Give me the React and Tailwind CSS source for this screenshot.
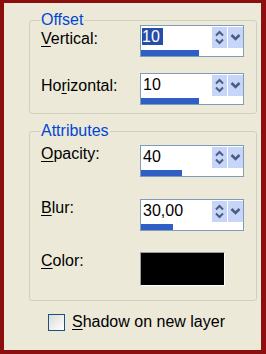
import React from 'react';

const SpinArrows = () => (
  <svg width="15" height="21" viewBox="0 0 15 21" aria-hidden="true">
    <path d="M4 8.5 L7.5 5 L11 8.5" fill="none" stroke="#4b5d85" strokeWidth="2" />
    <path d="M4 12.5 L7.5 16 L11 12.5" fill="none" stroke="#4b5d85" strokeWidth="2" />
  </svg>
);

const DropArrow = () => (
  <svg width="15" height="21" viewBox="0 0 15 21" aria-hidden="true">
    <path d="M3.5 8 L7.5 12 L11.5 8" fill="none" stroke="#4b5d85" strokeWidth="2.5" />
  </svg>
);

function SpinField({ value, fill, selected }) {
  return (
    <div className="flex h-[32px] w-[104px] flex-col border border-[#7f9db9] bg-white">
      <div className="flex h-[24px] items-start">
        <div className="flex-1 pl-[1px] pt-[1px] leading-[20px]">
          <span className={selected ? 'bg-[#244ea8] pr-[3px] text-white' : 'pl-[1px]'}>{value}</span>
        </div>
        <div className="mt-[1px] flex gap-[1px]">
          <span className="flex h-[21px] w-[15px] bg-[#c7d6f8]">
            <SpinArrows />
          </span>
          <span className="flex h-[21px] w-[15px] bg-[#c7d6f8]">
            <DropArrow />
          </span>
        </div>
      </div>
      <div className="h-[6px] bg-white">
        <div className="h-full bg-[#2f5fc4]" style={{ width: fill }} />
      </div>
    </div>
  );
}

function Mnemonic({ before = '', letter, after }) {
  return (
    <span>
      {before}
      <span className="underline underline-offset-[2px]">{letter}</span>
      {after}
    </span>
  );
}

function Group({ title, className, children }) {
  return (
    <div className={`relative ml-[25px] mr-[4px] rounded-[3px] border border-[#d0d0bf] pl-[11px] ${className}`}>
      <span className="absolute left-[10px] top-[-10px] bg-[#ece9d8] px-[1px] leading-[18px] text-[#0046d5]">
        {title}
      </span>
      {children}
    </div>
  );
}

export default function App() {
  return (
    <div className="h-[354px] w-[266px] bg-[#8c0f0f] pb-[4px] pl-[4px] pr-[5px] pt-[3px] font-['Liberation_Sans',Arial,sans-serif] text-[16px] text-black">
      <div className="flex h-full flex-col bg-[#ece9d8]">
        <Group title="Offset" className="mt-[17px] pb-[8px] pt-[4px]">
          <div className="flex items-start">
            <div className="mt-[5px] w-[99px] leading-[18px]">
              <Mnemonic letter="V" after="ertical:" />
            </div>
            <SpinField value="10" fill={58} selected />
          </div>
          <div className="mt-[16px] flex items-start">
            <div className="mt-[4px] w-[99px] leading-[18px]">
              <Mnemonic before="Ho" letter="r" after="izontal:" />
            </div>
            <SpinField value="10" fill={58} />
          </div>
        </Group>

        <Group title="Attributes" className="mt-[17px] pb-[14px] pt-[13px]">
          <div className="flex items-start">
            <div className="mt-[0px] w-[99px] leading-[18px]">
              <Mnemonic letter="O" after="pacity:" />
            </div>
            <SpinField value="40" fill={41} />
          </div>
          <div className="mt-[22px] flex items-start">
            <div className="mt-[0px] w-[99px] leading-[18px]">
              <Mnemonic letter="B" after="lur:" />
            </div>
            <SpinField value="30,00" fill={32} />
          </div>
          <div className="mt-[21px] flex items-start">
            <div className="mt-[0px] w-[99px] leading-[18px]">
              <Mnemonic letter="C" after="olor:" />
            </div>
            <div className="h-[34px] w-[85px] border border-b-white border-l-[#9c9c9c] border-r-white border-t-[#9c9c9c] bg-black" />
          </div>
        </Group>

        <label className="ml-[44px] mt-[12px] flex items-center gap-[7px] leading-[18px]">
          <span className="h-[17px] w-[17px] border border-[#1c5180] bg-gradient-to-br from-[#dcdcd6] to-white" />
          <Mnemonic letter="S" after="hadow on new layer" />
        </label>
      </div>
    </div>
  );
}
